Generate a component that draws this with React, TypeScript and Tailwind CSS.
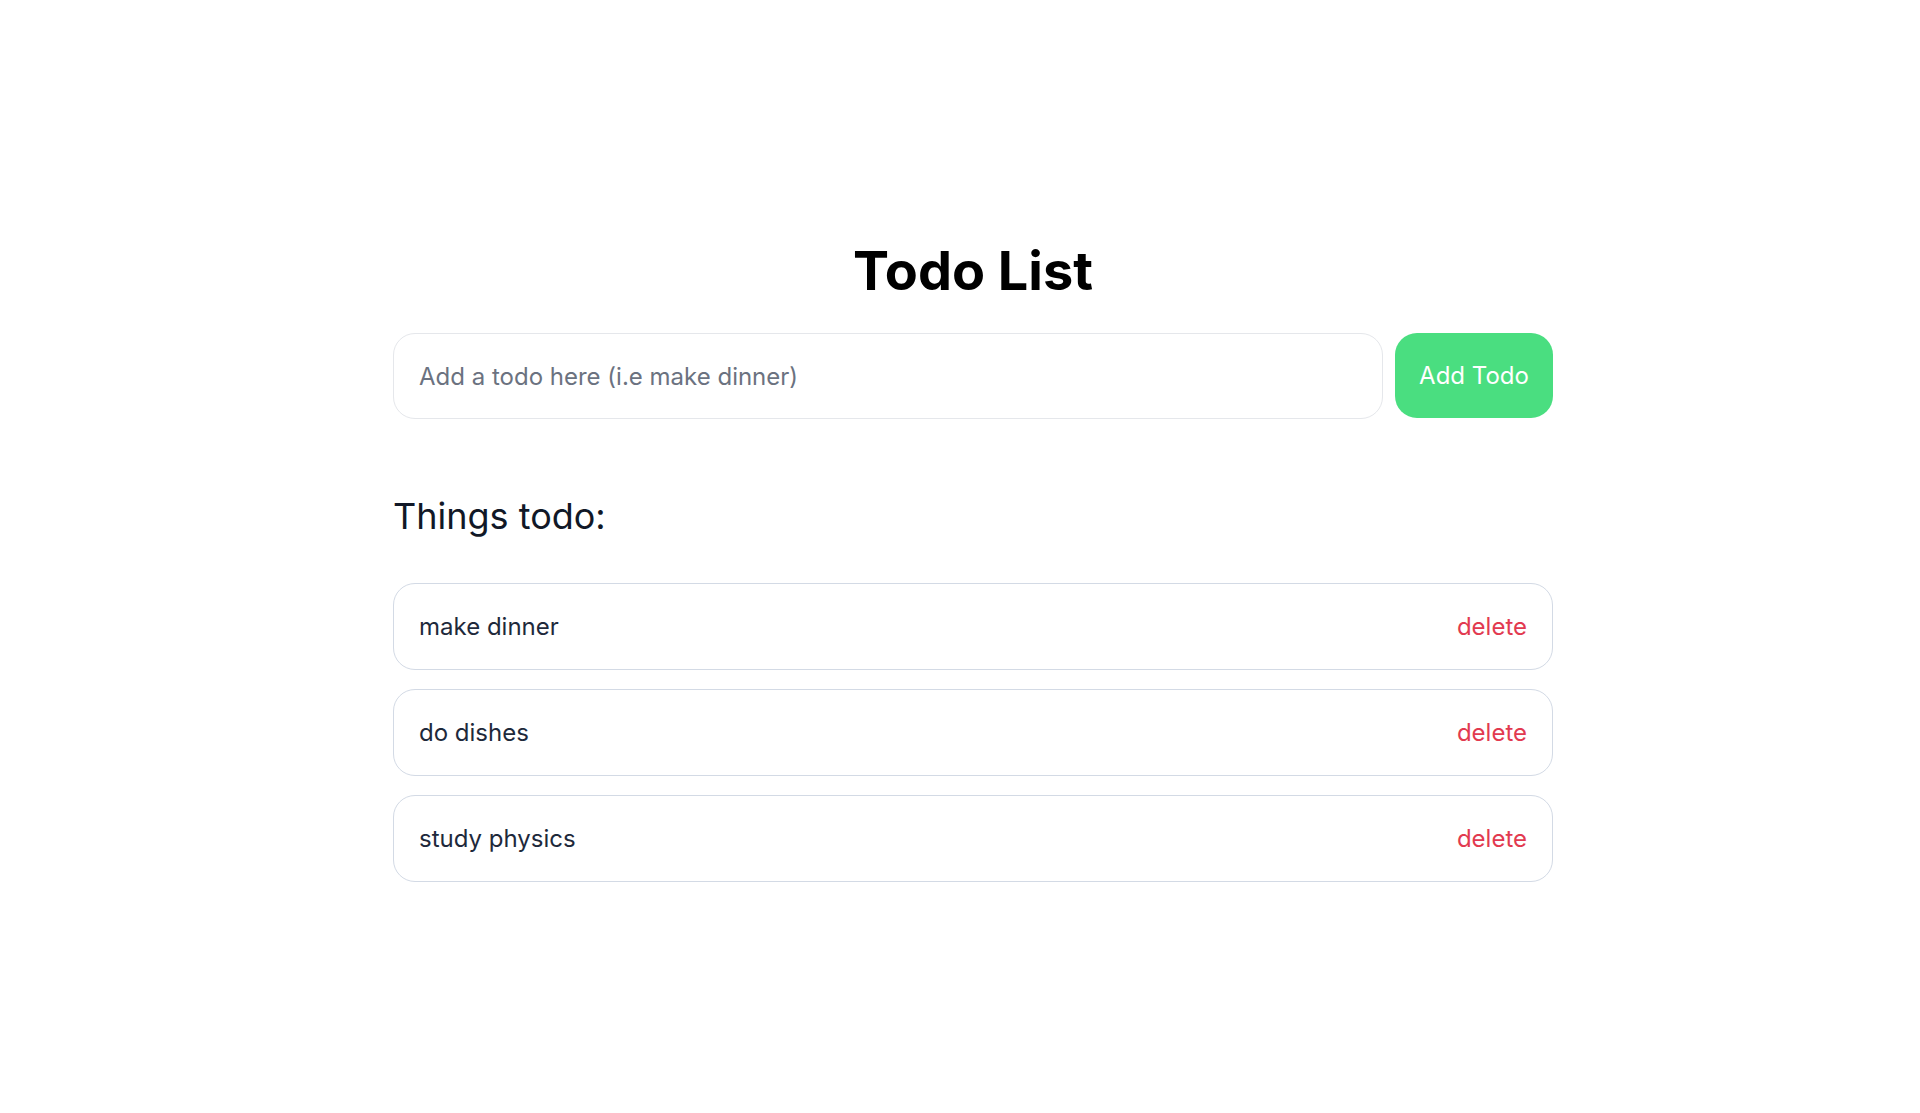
import { useState } from 'react';

const font = { fontFamily: 'Inter, "Noto Sans", sans-serif' };

export default function App() {
  const [todos, setTodos] = useState(['make dinner', 'do dishes', 'study physics']);
  const [text, setText] = useState('');

  const add = () => {
    if (!text.trim()) return;
    setTodos([...todos, text.trim()]);
    setText('');
  };

  return (
    <div className="min-h-screen bg-white pl-[26px]" style={font}>
      <div className="mx-auto w-[1160px] pt-[244px]">
        <h1 className="text-center text-[54px] font-bold leading-none text-black">Todo List</h1>

        <div className="mt-[35px] flex gap-3">
          <input
            value={text}
            onChange={(e) => setText(e.target.value)}
            placeholder="Add a todo here (i.e make dinner)"
            className="h-[86px] flex-1 rounded-[22px] border border-[#e5e7eb] px-[25px] text-2xl text-[#1e293b] outline-none placeholder:text-[#6b7280]"
          />
          <button
            onClick={add}
            className="h-[85px] w-[158px] rounded-[22px] bg-[#4ade80] text-2xl text-white"
          >
            Add Todo
          </button>
        </div>

        <h2 className="mt-[79px] text-4xl leading-none text-[#111827]">Things todo:</h2>

        <ul className="mt-[49px] flex flex-col gap-[19px]">
          {todos.map((t, i) => (
            <li
              key={t + i}
              className="flex h-[87px] items-center justify-between rounded-[22px] border border-[#d3dae5] px-[25px] text-2xl"
            >
              <span className="text-[#1e293b]">{t}</span>
              <button
                onClick={() => setTodos(todos.filter((_, j) => j !== i))}
                className="text-[#e23a50]"
              >
                delete
              </button>
            </li>
          ))}
        </ul>
      </div>
    </div>
  );
}
